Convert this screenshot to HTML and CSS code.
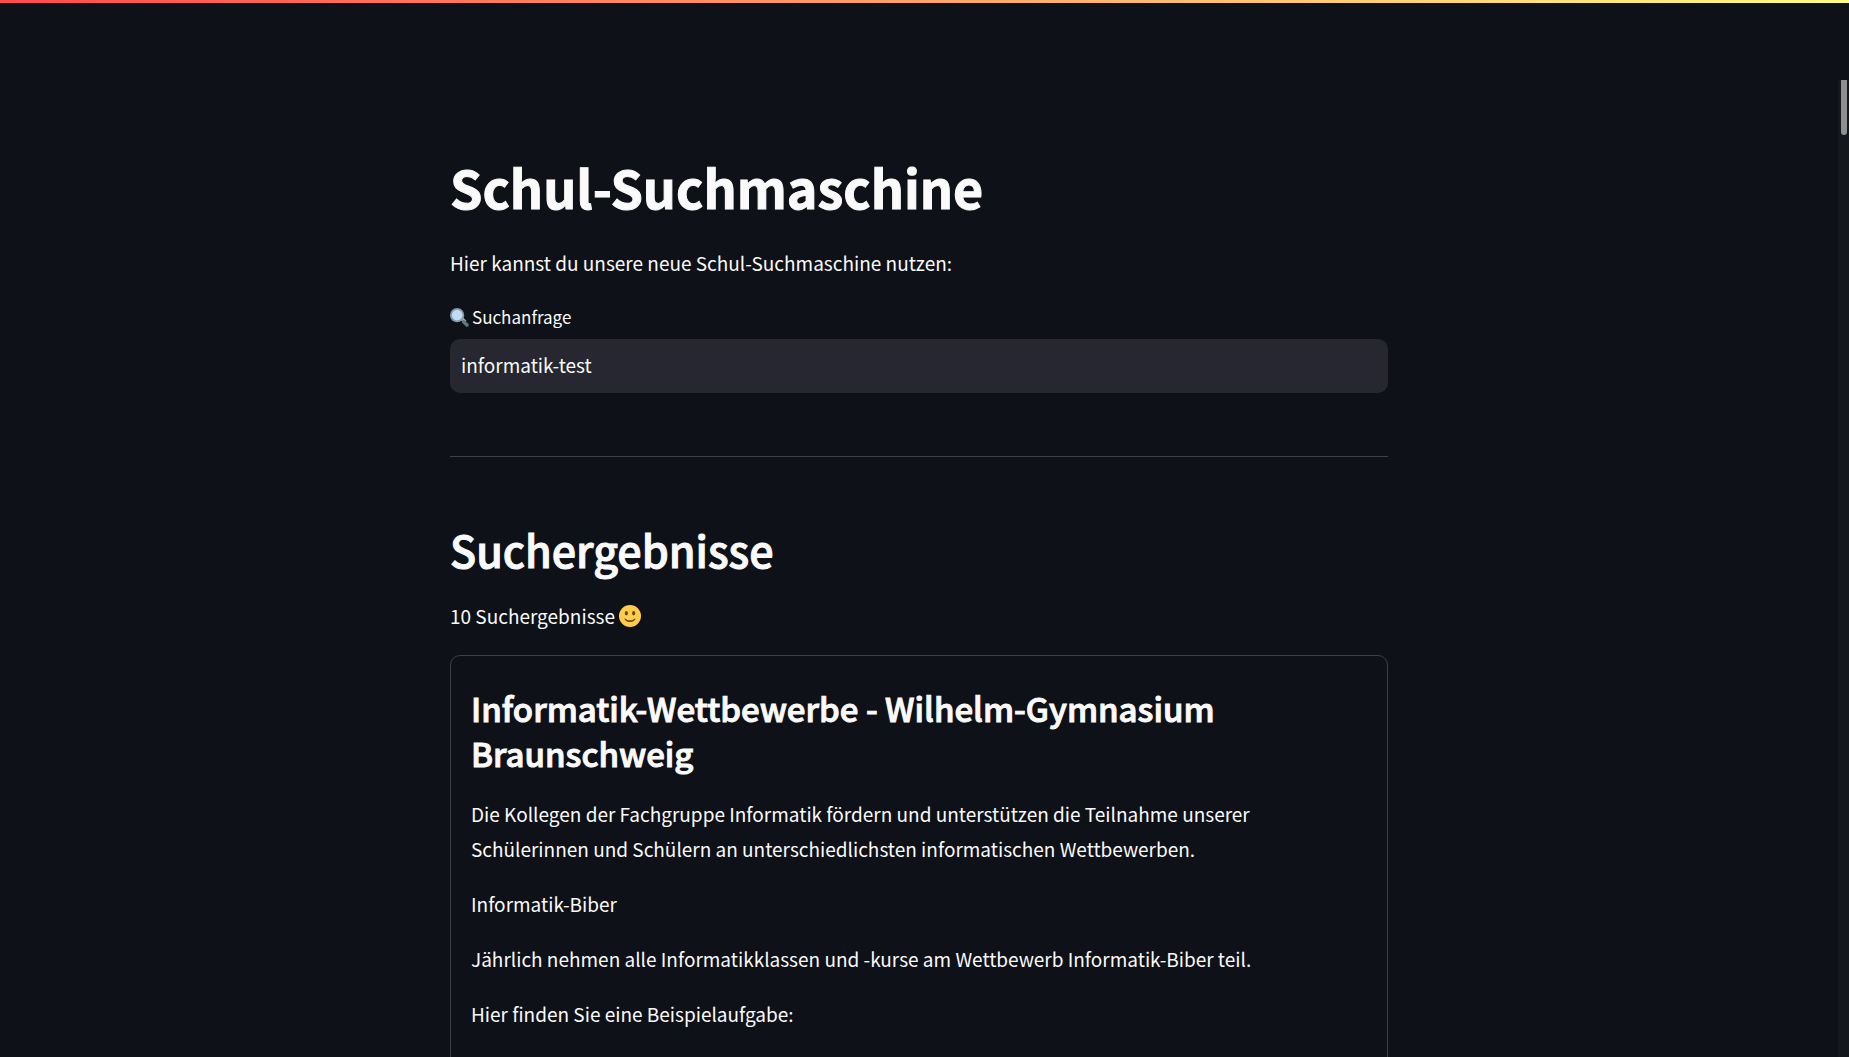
FILE: index.html
```html
<!DOCTYPE html>
<html lang="de">
<head>
<meta charset="utf-8">
<meta name="viewport" content="width=device-width, initial-scale=1">
<title>Schul-Suchmaschine</title>
<link rel="stylesheet" href="styles.css">
</head>
<body>
<header class="toolbar"></header>
<div class="app">
  <main class="view">
    <div class="content">
      <h1 class="title">Schul-Suchmaschine</h1>
      <p class="text intro">Hier kannst du unsere neue Schul-Suchmaschine nutzen:</p>
      <form class="search">
        <label class="search-label" for="query">
          <svg class="icon-search" viewBox="0 0 36 36" aria-hidden="true">
            <path fill="#9aaab4" d="M22 21l3-3 6 6-4 4-5-5z"/>
            <path fill="#66757f" d="M34.600 29.900l-6.400-6.400c-1.300-1.300-3.400-1.300-4.700 0s-1.300 3.400 0 4.700l6.400 6.400c1.300 1.300 3.400 1.300 4.700 0s1.300-3.400 0-4.700z"/>
            <circle cx="13.500" cy="13.500" r="13.500" fill="#8899a6"/>
            <circle cx="13.500" cy="13.500" r="10" fill="#bbddf5"/>
          </svg>
          Suchanfrage
        </label>
        <input class="search-input" id="query" type="text" value="informatik-test">
      </form>
      <hr class="divider">
      <h2 class="subtitle">Suchergebnisse</h2>
      <p class="text count">10 Suchergebnisse
        <svg class="icon-smile" viewBox="0 0 36 36" role="img" aria-label="Lächeln">
          <circle cx="18" cy="18" r="18" fill="#ffcc4d"/>
          <path fill="#664500" d="M10.500 22.300c-.300-.300-.800-.400-1.100-.100-.400.300-.500.800-.200 1.200.1.200 2.800 4.600 8.800 4.600s8.700-4.400 8.800-4.600c.3-.4.200-.9-.2-1.200-.3-.3-.8-.2-1.100.1 0 0-2.600 2.700-7.500 2.700s-7.500-2.700-7.500-2.700z"/>
          <ellipse cx="12" cy="13.500" rx="2.500" ry="3.500" fill="#664500"/>
          <ellipse cx="24" cy="13.500" rx="2.500" ry="3.500" fill="#664500"/>
        </svg>
      </p>
      <article class="card">
        <h3 class="card-title">Informatik-Wettbewerbe - Wilhelm-Gymnasium Braunschweig</h3>
        <p class="text">Die Kollegen der Fachgruppe Informatik fördern und unterstützen die Teilnahme unserer Schülerinnen und Schülern an unterschiedlichsten informatischen Wettbewerben.</p>
        <p class="text">Informatik-Biber</p>
        <p class="text">Jährlich nehmen alle Informatikklassen und -kurse am Wettbewerb Informatik-Biber teil.</p>
        <p class="text">Hier finden Sie eine Beispielaufgabe:</p>
      </article>
    </div>
  </main>
  <div class="scrollbar" aria-hidden="true"><div class="thumb"></div></div>
</div>
</body>
</html>
```
FILE: styles.css
```css
* {
  box-sizing: border-box;
  margin: 0;
}

body {
  display: flex;
  flex-direction: column;
  height: 100vh;
  overflow: hidden;
  background: #0e1117;
  color: #fafafa;
  font-family: "Noto Sans CJK SC", "Noto Sans", sans-serif;
  font-size: 19px;
}

.toolbar {
  flex: none;
  height: 80px;
  background: linear-gradient(90deg, #ff4b4b, #fffd80) top / 100% 3px no-repeat;
}

.app {
  display: flex;
  flex: 1;
  min-height: 0;
}

.view {
  flex: 1;
  overflow: hidden;
  padding: 72px 20px 0;
}

.content {
  display: flex;
  flex-direction: column;
  max-width: 938px;
  margin: 0 auto;
}

.title,
.subtitle,
.card-title {
  -webkit-text-stroke: 1px currentColor;
}

.title {
  font-size: 52px;
  font-weight: 700;
  line-height: 70px;
}

.text {
  line-height: 35px;
}

.intro {
  margin: 23px 0 25px;
}

.search {
  display: flex;
  flex-direction: column;
  gap: 10px;
}

.search-label {
  display: flex;
  align-items: center;
  gap: 3px;
  font-size: 17px;
  line-height: 24px;
}

.icon-search {
  width: 19px;
  height: 19px;
}

.search-input {
  width: 100%;
  height: 54px;
  padding: 0 11px 4px;
  border: 0;
  border-radius: 10px;
  background: #262730;
  color: inherit;
  font: inherit;
}

.divider {
  height: 1px;
  margin: 63px 0;
  border: 0;
  background: #3d4044;
}

.subtitle {
  font-size: 43px;
  font-weight: 500;
  line-height: 58px;
}

.count {
  display: flex;
  align-items: center;
  gap: 4px;
  margin: 20px 0 22px;
}

.icon-smile {
  width: 22px;
  height: 22px;
}

.card {
  display: flex;
  flex-direction: column;
  gap: 20px;
  padding: 30px 20px 60px;
  border: 1px solid #3d4044;
  border-radius: 10px;
}

.card-title {
  font-size: 33px;
  font-weight: 500;
  line-height: 45px;
}

.scrollbar {
  display: flex;
  flex: none;
  justify-content: center;
  width: 11px;
  background: #14181c;
}

.thumb {
  width: 6px;
  height: 55px;
  border-radius: 0 0 3px 3px;
  background: #8f8f8f;
}
```
